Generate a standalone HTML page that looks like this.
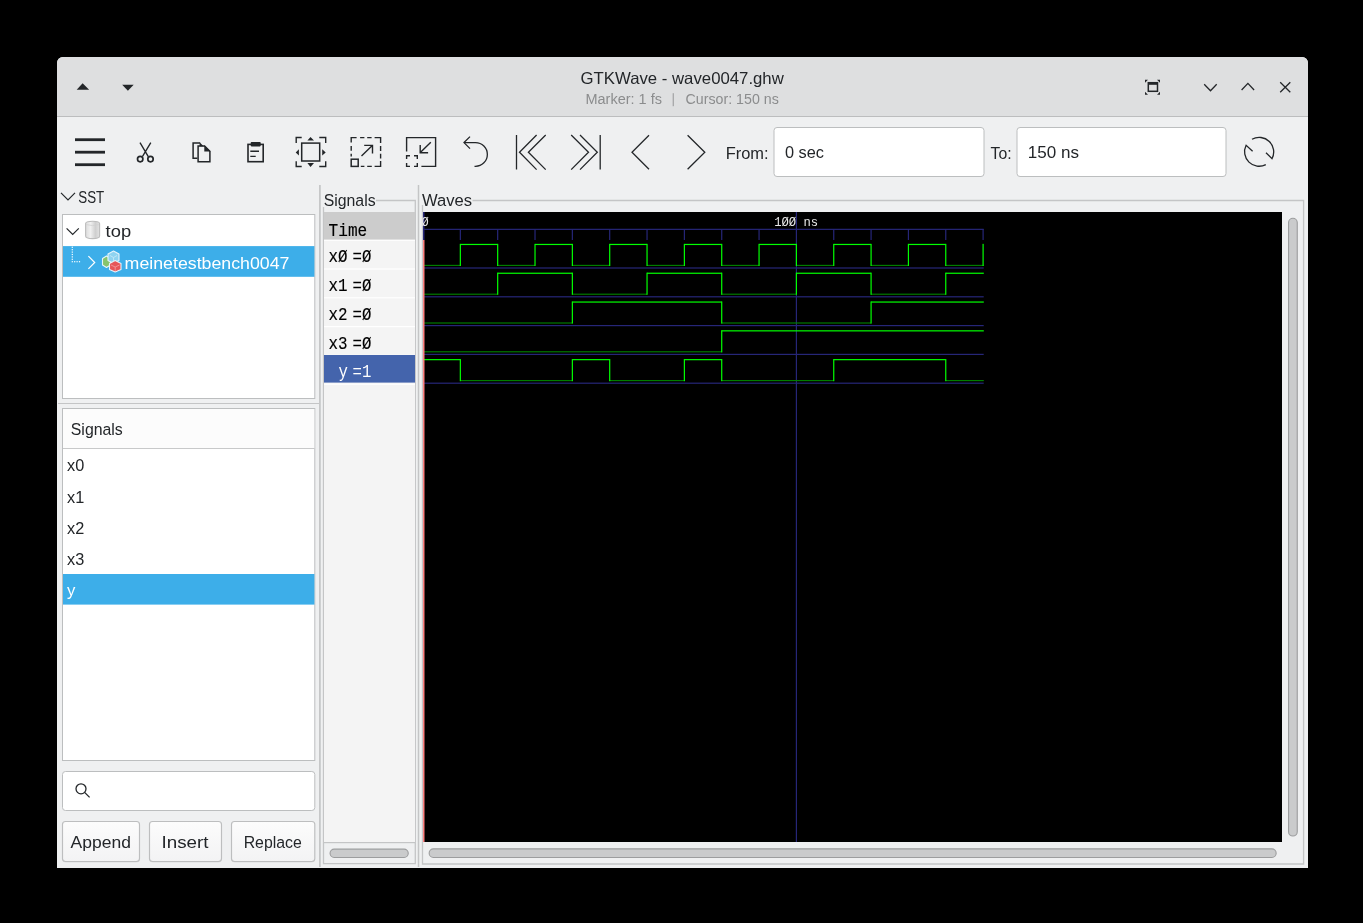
<!DOCTYPE html>
<html><head><meta charset="utf-8"><title>GTKWave - wave0047.ghw</title>
<style>
html,body{margin:0;padding:0;background:#000;width:1363px;height:923px;overflow:hidden}
svg{display:block;position:absolute;left:0;top:0;will-change:transform}
.s{font-family:"Liberation Sans",sans-serif;fill:#232629}
.m{font-family:"Liberation Mono",monospace;stroke:currentColor;stroke-width:0.15}
</style></head><body>
<svg width="1363" height="923" viewBox="0 0 1363 923">
<!-- window -->
<path d="M57,63 A6,6 0 0 1 63,57 L1302,57 A6,6 0 0 1 1308,63 L1308,868 L57,868 Z" fill="#eff0f1"/>
<!-- title bar -->
<path d="M57,63 A6,6 0 0 1 63,57 L1302,57 A6,6 0 0 1 1308,63 L1308,116 L57,116 Z" fill="#dedfe0"/>
<rect x="57" y="116" width="1251" height="1" fill="#bcbdbe"/>

<!-- title texts -->
<text class="s" x="580.5" y="83.7" font-size="16.5" textLength="203.3" lengthAdjust="spacingAndGlyphs">GTKWave - wave0047.ghw</text>
<text class="s" x="585.5" y="103.7" font-size="14" fill="#8a8b8c" style="fill:#8b8c8d" textLength="76.4" lengthAdjust="spacingAndGlyphs">Marker: 1 fs</text>
<rect x="672.7" y="93.2" width="1.1" height="13" fill="#9c9d9e"/>
<text class="s" x="685.5" y="103.7" font-size="14" style="fill:#8b8c8d" textLength="93.3" lengthAdjust="spacingAndGlyphs">Cursor: 150 ns</text>

<!-- toolbar text -->
<text class="s" x="725.7" y="158.6" font-size="16.7" textLength="42.9" lengthAdjust="spacingAndGlyphs">From:</text>
<rect x="774" y="127.5" width="210" height="49" rx="3" fill="#fff" stroke="#bcbebf" stroke-width="1"/>
<text class="s" x="785" y="158.4" font-size="16.7" textLength="39" lengthAdjust="spacingAndGlyphs">0 sec</text>
<text class="s" x="990.5" y="158.6" font-size="16.7" textLength="21.1" lengthAdjust="spacingAndGlyphs">To:</text>
<rect x="1017" y="127.5" width="209" height="49" rx="3" fill="#fff" stroke="#bcbebf" stroke-width="1"/>
<text class="s" x="1027.8" y="158.4" font-size="16.7" textLength="51.2" lengthAdjust="spacingAndGlyphs">150 ns</text>

<!-- left pane -->
<text class="s" x="78.3" y="203.3" font-size="16.7" textLength="26" lengthAdjust="spacingAndGlyphs">SST</text>
<rect x="62.5" y="214.5" width="252.3" height="184" fill="#fff" stroke="#bcbebf"/>
<rect x="63" y="246.1" width="251.4" height="30.7" fill="#3daee9"/>
<text class="s" x="105.6" y="237" font-size="16.7" textLength="25.5" lengthAdjust="spacingAndGlyphs">top</text>
<text class="s" x="124.6" y="269" font-size="16.7" style="fill:#fff" textLength="164.9" lengthAdjust="spacingAndGlyphs">meinetestbench0047</text>

<rect x="58" y="403" width="261" height="1" fill="#c4c5c6"/>
<rect x="62.5" y="408.5" width="252.3" height="352" fill="#fff" stroke="#bcbebf"/>
<rect x="63" y="409" width="251.3" height="39" fill="#fcfcfc"/>
<rect x="63" y="448" width="251.3" height="1" fill="#c8c9ca"/>
<text class="s" x="70.8" y="434.9" font-size="16.7" textLength="52" lengthAdjust="spacingAndGlyphs">Signals</text>
<rect x="63" y="574" width="251.4" height="30.6" fill="#3daee9"/>
<text class="s" x="67.1" y="471.3" font-size="16.7" textLength="17.2" lengthAdjust="spacingAndGlyphs">x0</text>
<text class="s" x="67.1" y="502.5" font-size="16.7" textLength="17.2" lengthAdjust="spacingAndGlyphs">x1</text>
<text class="s" x="67.1" y="533.7" font-size="16.7" textLength="17.2" lengthAdjust="spacingAndGlyphs">x2</text>
<text class="s" x="67.1" y="564.9" font-size="16.7" textLength="17.2" lengthAdjust="spacingAndGlyphs">x3</text>
<text class="s" x="67.1" y="596.1" font-size="16.7" style="fill:#fff">y</text>

<rect x="62.5" y="771.5" width="252.3" height="39" rx="3" fill="#fff" stroke="#bcbebf"/>
<defs><linearGradient id="btn" x1="0" x2="0" y1="0" y2="1"><stop offset="0" stop-color="#fcfcfc"/><stop offset="1" stop-color="#f3f3f4"/></linearGradient></defs>
<rect x="62.5" y="822.5" width="77" height="40" rx="3.5" fill="#000" fill-opacity="0.07"/>
<rect x="149.5" y="822.5" width="72" height="40" rx="3.5" fill="#000" fill-opacity="0.07"/>
<rect x="231.5" y="822.5" width="83.3" height="40" rx="3.5" fill="#000" fill-opacity="0.07"/>
<rect x="62.5" y="821.5" width="77" height="40" rx="3" fill="url(#btn)" stroke="#bdbebf" stroke-width="1.15"/>
<rect x="149.5" y="821.5" width="72" height="40" rx="3" fill="url(#btn)" stroke="#bdbebf" stroke-width="1.15"/>
<rect x="231.5" y="821.5" width="83.3" height="40" rx="3" fill="url(#btn)" stroke="#bdbebf" stroke-width="1.15"/>
<text class="s" x="70.6" y="848" font-size="16.7" textLength="60.3" lengthAdjust="spacingAndGlyphs">Append</text>
<text class="s" x="161.5" y="848" font-size="16.7" textLength="47" lengthAdjust="spacingAndGlyphs">Insert</text>
<text class="s" x="243.7" y="848" font-size="16.7" textLength="58.1" lengthAdjust="spacingAndGlyphs">Replace</text>

<!-- pane separators -->
<rect x="319.05" y="185" width="1.7" height="682" fill="#c4c5c6"/>
<rect x="417.75" y="185" width="1.5" height="682" fill="#c4c5c6"/>

<!-- signals pane -->
<text class="s" x="323.7" y="205.9" font-size="16.7" textLength="51.9" lengthAdjust="spacingAndGlyphs">Signals</text>
<path d="M376,200.5 H415.3 V863.6 H323.5 V207" fill="none" stroke="#c4c5c6" stroke-width="1.3"/>
<rect x="324" y="212" width="91" height="630" fill="#f4f4f4"/>
<rect x="324" y="212" width="91" height="28" fill="#cccccc"/>
<text class="m" color="#000" x="328.6" y="236" font-size="18.6" fill="#000" textLength="38.6" lengthAdjust="spacingAndGlyphs">Time</text>
<rect x="324" y="239.60" width="91" height="1.2" fill="#ffffff"/>
<rect x="324" y="268.40" width="91" height="1.2" fill="#ffffff"/>
<rect x="324" y="297.20" width="91" height="1.2" fill="#ffffff"/>
<rect x="324" y="326.00" width="91" height="1.2" fill="#ffffff"/>
<rect x="324" y="354.80" width="91" height="1.2" fill="#ffffff"/>
<rect x="324" y="383.60" width="91" height="1.2" fill="#ffffff"/>
<text class="m" color="#000" x="328.6" y="262.1" font-size="18.6" fill="#000" textLength="19" lengthAdjust="spacingAndGlyphs">xØ</text>
<text class="m" color="#000" x="352.6" y="262.1" font-size="18.6" fill="#000" textLength="18.8" lengthAdjust="spacingAndGlyphs">=Ø</text>
<text class="m" color="#000" x="328.6" y="290.9" font-size="18.6" fill="#000" textLength="19" lengthAdjust="spacingAndGlyphs">x1</text>
<text class="m" color="#000" x="352.6" y="290.9" font-size="18.6" fill="#000" textLength="18.8" lengthAdjust="spacingAndGlyphs">=Ø</text>
<text class="m" color="#000" x="328.6" y="319.7" font-size="18.6" fill="#000" textLength="19" lengthAdjust="spacingAndGlyphs">x2</text>
<text class="m" color="#000" x="352.6" y="319.7" font-size="18.6" fill="#000" textLength="18.8" lengthAdjust="spacingAndGlyphs">=Ø</text>
<text class="m" color="#000" x="328.6" y="348.5" font-size="18.6" fill="#000" textLength="19" lengthAdjust="spacingAndGlyphs">x3</text>
<text class="m" color="#000" x="352.6" y="348.5" font-size="18.6" fill="#000" textLength="18.8" lengthAdjust="spacingAndGlyphs">=Ø</text>
<rect x="324" y="355" width="91" height="27.6" fill="#4464ac"/>
<text class="m" color="#fff" style="stroke:none" x="338.6" y="377.3" font-size="18.6" fill="#fff" textLength="9.4" lengthAdjust="spacingAndGlyphs">y</text>
<text class="m" color="#fff" style="stroke:none" x="352.6" y="377.3" font-size="18.6" fill="#fff" textLength="18.8" lengthAdjust="spacingAndGlyphs">=1</text>
<rect x="324" y="842" width="91" height="1.2" fill="#c4c5c6"/>
<rect x="330.05" y="849.15" width="78.2" height="8.3" rx="4.15" fill="#cacbcc" stroke="#9c9d9e" stroke-width="1.1"/>

<!-- waves pane -->
<text class="s" x="422" y="205.9" font-size="16.7" textLength="50.1" lengthAdjust="spacingAndGlyphs">Waves</text>
<path d="M472.5,200.5 H1303.6 V864 H422.5 V205" fill="none" stroke="#c4c5c6" stroke-width="1.3"/>
<rect x="423" y="212" width="859" height="630" fill="#000"/>
<rect x="423" y="228.75" width="560.70" height="1.2" fill="#262678"/>
<rect x="459.74" y="229" width="1.2" height="11" fill="#262678"/>
<rect x="497.08" y="229" width="1.2" height="11" fill="#262678"/>
<rect x="534.42" y="229" width="1.2" height="11" fill="#262678"/>
<rect x="571.76" y="229" width="1.2" height="11" fill="#262678"/>
<rect x="609.10" y="229" width="1.2" height="11" fill="#262678"/>
<rect x="646.44" y="229" width="1.2" height="11" fill="#262678"/>
<rect x="683.78" y="229" width="1.2" height="11" fill="#262678"/>
<rect x="721.12" y="229" width="1.2" height="11" fill="#262678"/>
<rect x="758.46" y="229" width="1.2" height="11" fill="#262678"/>
<rect x="833.14" y="229" width="1.2" height="11" fill="#262678"/>
<rect x="870.48" y="229" width="1.2" height="11" fill="#262678"/>
<rect x="907.82" y="229" width="1.2" height="11" fill="#262678"/>
<rect x="945.16" y="229" width="1.2" height="11" fill="#262678"/>
<rect x="982.50" y="229" width="1.2" height="11" fill="#262678"/>
<rect x="423" y="212" width="1.5" height="28" fill="#262678"/>
<rect x="423" y="267.40" width="560.70" height="1.2" fill="#262678"/>
<rect x="423" y="296.20" width="560.70" height="1.2" fill="#262678"/>
<rect x="423" y="325.00" width="560.70" height="1.2" fill="#262678"/>
<rect x="423" y="353.80" width="560.70" height="1.2" fill="#262678"/>
<rect x="423" y="382.60" width="560.70" height="1.2" fill="#262678"/>
<rect x="795.80" y="212" width="1.2" height="630" fill="#262678"/>
<rect x="423.00" y="264.85" width="37.34" height="1.1" fill="#008400"/>
<rect x="460.34" y="243.85" width="37.34" height="1.2" fill="#00ff00"/>
<rect x="459.74" y="243.85" width="1.2" height="22.15" fill="#00ff00"/>
<rect x="497.68" y="264.85" width="37.34" height="1.1" fill="#008400"/>
<rect x="497.08" y="243.85" width="1.2" height="22.15" fill="#00ff00"/>
<rect x="535.02" y="243.85" width="37.34" height="1.2" fill="#00ff00"/>
<rect x="534.42" y="243.85" width="1.2" height="22.15" fill="#00ff00"/>
<rect x="572.36" y="264.85" width="37.34" height="1.1" fill="#008400"/>
<rect x="571.76" y="243.85" width="1.2" height="22.15" fill="#00ff00"/>
<rect x="609.70" y="243.85" width="37.34" height="1.2" fill="#00ff00"/>
<rect x="609.10" y="243.85" width="1.2" height="22.15" fill="#00ff00"/>
<rect x="647.04" y="264.85" width="37.34" height="1.1" fill="#008400"/>
<rect x="646.44" y="243.85" width="1.2" height="22.15" fill="#00ff00"/>
<rect x="684.38" y="243.85" width="37.34" height="1.2" fill="#00ff00"/>
<rect x="683.78" y="243.85" width="1.2" height="22.15" fill="#00ff00"/>
<rect x="721.72" y="264.85" width="37.34" height="1.1" fill="#008400"/>
<rect x="721.12" y="243.85" width="1.2" height="22.15" fill="#00ff00"/>
<rect x="759.06" y="243.85" width="37.34" height="1.2" fill="#00ff00"/>
<rect x="758.46" y="243.85" width="1.2" height="22.15" fill="#00ff00"/>
<rect x="796.40" y="264.85" width="37.34" height="1.1" fill="#008400"/>
<rect x="795.80" y="243.85" width="1.2" height="22.15" fill="#00ff00"/>
<rect x="833.74" y="243.85" width="37.34" height="1.2" fill="#00ff00"/>
<rect x="833.14" y="243.85" width="1.2" height="22.15" fill="#00ff00"/>
<rect x="871.08" y="264.85" width="37.34" height="1.1" fill="#008400"/>
<rect x="870.48" y="243.85" width="1.2" height="22.15" fill="#00ff00"/>
<rect x="908.42" y="243.85" width="37.34" height="1.2" fill="#00ff00"/>
<rect x="907.82" y="243.85" width="1.2" height="22.15" fill="#00ff00"/>
<rect x="945.76" y="264.85" width="38.04" height="1.1" fill="#008400"/>
<rect x="945.16" y="243.85" width="1.2" height="22.15" fill="#00ff00"/>
<rect x="423.00" y="293.65" width="74.68" height="1.1" fill="#008400"/>
<rect x="497.68" y="272.65" width="74.68" height="1.2" fill="#00ff00"/>
<rect x="497.08" y="272.65" width="1.2" height="22.15" fill="#00ff00"/>
<rect x="572.36" y="293.65" width="74.68" height="1.1" fill="#008400"/>
<rect x="571.76" y="272.65" width="1.2" height="22.15" fill="#00ff00"/>
<rect x="647.04" y="272.65" width="74.68" height="1.2" fill="#00ff00"/>
<rect x="646.44" y="272.65" width="1.2" height="22.15" fill="#00ff00"/>
<rect x="721.72" y="293.65" width="74.68" height="1.1" fill="#008400"/>
<rect x="721.12" y="272.65" width="1.2" height="22.15" fill="#00ff00"/>
<rect x="796.40" y="272.65" width="74.68" height="1.2" fill="#00ff00"/>
<rect x="795.80" y="272.65" width="1.2" height="22.15" fill="#00ff00"/>
<rect x="871.08" y="293.65" width="74.68" height="1.1" fill="#008400"/>
<rect x="870.48" y="272.65" width="1.2" height="22.15" fill="#00ff00"/>
<rect x="945.76" y="272.65" width="38.04" height="1.2" fill="#00ff00"/>
<rect x="945.16" y="272.65" width="1.2" height="22.15" fill="#00ff00"/>
<rect x="423.00" y="322.45" width="149.36" height="1.1" fill="#008400"/>
<rect x="572.36" y="301.45" width="149.36" height="1.2" fill="#00ff00"/>
<rect x="571.76" y="301.45" width="1.2" height="22.15" fill="#00ff00"/>
<rect x="721.72" y="322.45" width="149.36" height="1.1" fill="#008400"/>
<rect x="721.12" y="301.45" width="1.2" height="22.15" fill="#00ff00"/>
<rect x="871.08" y="301.45" width="112.72" height="1.2" fill="#00ff00"/>
<rect x="870.48" y="301.45" width="1.2" height="22.15" fill="#00ff00"/>
<rect x="423.00" y="351.25" width="298.72" height="1.1" fill="#008400"/>
<rect x="721.72" y="330.25" width="262.08" height="1.2" fill="#00ff00"/>
<rect x="721.12" y="330.25" width="1.2" height="22.15" fill="#00ff00"/>
<rect x="423.00" y="359.05" width="37.34" height="1.2" fill="#00ff00"/>
<rect x="460.34" y="380.05" width="112.02" height="1.1" fill="#008400"/>
<rect x="459.74" y="359.05" width="1.2" height="22.15" fill="#00ff00"/>
<rect x="572.36" y="359.05" width="37.34" height="1.2" fill="#00ff00"/>
<rect x="571.76" y="359.05" width="1.2" height="22.15" fill="#00ff00"/>
<rect x="609.70" y="380.05" width="74.68" height="1.1" fill="#008400"/>
<rect x="609.10" y="359.05" width="1.2" height="22.15" fill="#00ff00"/>
<rect x="684.38" y="359.05" width="37.34" height="1.2" fill="#00ff00"/>
<rect x="683.78" y="359.05" width="1.2" height="22.15" fill="#00ff00"/>
<rect x="721.72" y="380.05" width="112.02" height="1.1" fill="#008400"/>
<rect x="721.12" y="359.05" width="1.2" height="22.15" fill="#00ff00"/>
<rect x="833.74" y="359.05" width="112.02" height="1.2" fill="#00ff00"/>
<rect x="833.14" y="359.05" width="1.2" height="22.15" fill="#00ff00"/>
<rect x="945.76" y="380.05" width="38.04" height="1.1" fill="#008400"/>
<rect x="945.16" y="359.05" width="1.2" height="22.15" fill="#00ff00"/>
<rect x="982.50" y="243.85" width="1.2" height="22.15" fill="#00ff00"/>
<rect x="423" y="240" width="1.5" height="602" fill="#ff8080"/>
<text class="m" color="#e8e8e8" style="stroke:none" x="421.6" y="226" font-size="12" fill="#e8e8e8">Ø</text>
<text class="m" color="#e8e8e8" style="stroke:none" x="774.2" y="226" font-size="12.8" fill="#e8e8e8" textLength="44" lengthAdjust="spacingAndGlyphs">1ØØ ns</text>
<rect x="1288.55" y="218.25" width="8.7" height="617.8" rx="4.35" fill="#cacbcc" stroke="#9c9d9e" stroke-width="1.1"/>
<rect x="429.15" y="848.85" width="847" height="8.6" rx="4.3" fill="#cacbcc" stroke="#9c9d9e" stroke-width="1.1"/>


<!-- titlebar buttons -->
<path d="M76.7,89.7 L82.6,83.2 L89.1,89.7 Z" fill="#232629"/>
<path d="M122.2,84.7 L133.7,84.7 L127.9,90.8 Z" fill="#232629"/>
<g fill="none" stroke="#232629" stroke-width="1.3">
<rect x="1148.3" y="82.7" width="9.2" height="8.6" stroke-width="1.5"/>
<path d="M1204.2,84.3 L1210.5,90.8 L1216.7,84.3"/>
<path d="M1241.6,90 L1247.9,83.4 L1254.1,90"/>
<path d="M1280.2,82.2 L1290.3,92.2 M1290.3,82.2 L1280.2,92.2"/>
</g>
<rect x="1148" y="82.2" width="10" height="2.6" fill="#232629"/>
<path d="M1145,79.7 h3 l-3,3 z M1160,79.7 h-3 l3,3 z M1145,94.7 h3 l-3,-3 z M1160,94.7 h-3 l3,-3 z" fill="#232629"/>

<!-- toolbar icons -->
<g fill="#232629">
<rect x="75" y="138.3" width="30" height="2.8"/>
<rect x="75" y="150.8" width="30" height="2.8"/>
<rect x="75" y="163.3" width="30" height="2.8"/>
</g>
<g fill="none" stroke="#232629" stroke-width="1.35">
<!-- scissors -->
<path d="M140,142.6 L148.3,156.6 M150.8,142.6 L142.4,156.6"/>
<circle cx="140.2" cy="159.1" r="2.7" stroke-width="1.7"/>
<circle cx="150.5" cy="159.1" r="2.7" stroke-width="1.7"/>
</g>
<g fill="none" stroke="#232629" stroke-width="1.5">
<!-- copy -->
<path d="M197.4,158.2 H193.1 V142.9 H200.2"/>
<path d="M198.1,145.9 H204.6 L209.9,151.2 V161.7 H198.1 Z"/>
<!-- paste -->
<rect x="248" y="144.4" width="15.2" height="17.3" stroke-width="1.6"/>
<path d="M250.3,151.2 H259 M250.3,156.4 H255.7" stroke-width="1.4"/>
</g>
<path d="M204.3,145.2 L210.6,151.5 L204.3,151.5 Z M199.6,142.2 L203.6,146.2 L199.6,146.2 Z" fill="#232629"/>
<rect x="250.7" y="142.1" width="10" height="4.3" rx="0.8" fill="#232629"/>

<g fill="none" stroke="#232629" stroke-width="1.4">
<!-- zoom fit -->
<rect x="301.7" y="143.1" width="18" height="17.9" stroke-width="1.5"/>
<path d="M296.2,143.1 V137.5 H301.7 M319.3,137.5 H325.7 V143.1 M325.7,161.2 V166.5 H319.3 M301.7,166.5 H296.2 V161.2"/>
<!-- zoom in (dashed box + arrow) -->
<path d="M351.2,142.4 V137.6 H356.6 M360.1,137.6 H364.4 M367.2,137.6 H371.6 M374.6,137.6 H380.6 V142.9 M380.6,146 V151 M380.6,153.8 V158.4 M380.6,160.9 V166.4 H374.6 M371.8,166.4 H367.2 M364.4,166.4 H360.8 M351.2,146 V150.7 M351.2,153.8 V156.6"/>
<rect x="351.2" y="159.2" width="7" height="7.2" stroke-width="1.5"/>
<path d="M361.5,156 L372.3,145.5 M364.2,145.4 H372.5 V153.5"/>
<!-- zoom out -->
<path d="M406.6,151.4 V137.6 H435.6 V166.4 H421.4"/>
<path d="M406.6,159 V155.7 H410 M414,155.7 H417.3 V159 M417.3,163 V166.4 H414 M410,166.4 H406.6 V163"/>
<path d="M430.8,142.2 L420.3,152.6 M420.2,145 V152.8 H428.1"/>
</g>
<g fill="#232629">
<path d="M307.4,140.6 L310.5,137.1 L314,140.6 Z M307.4,163.1 L310.5,166.9 L314,163.1 Z M298.9,149.3 L295.7,152.4 L298.9,155.5 Z M322.2,149.3 L325.7,152.4 L322.2,155.5 Z"/>
</g>
<g fill="none" stroke="#232629" stroke-width="1.3">
<!-- undo -->
<path d="M464,142.6 H475.5 A11.85,11.85 0 0 1 475.5,166.3 H474.5"/>
<path d="M470,136.6 L464,142.6 L470,148.6"/>
<!-- |<< -->
<path d="M516.5,135 V169.6 M536.6,135 L519.5,152.2 L536.6,169.6 M545.7,135 L528.4,152.2 L545.7,169.6"/>
<!-- >>| -->
<path d="M600.2,135 V169.6 M571.2,135 L588.5,152.2 L571.2,169.6 M580,135 L597.3,152.2 L580,169.6"/>
<!-- < > -->
<path d="M649,135.2 L632,152.2 L649,169.3"/>
<path d="M687.6,135.2 L704.8,152.2 L687.6,169.3"/>
<!-- refresh -->
<path d="M1252,139.3 A14.5,14.5 0 0 1 1272,158.7 L1266,152.7"/>
<path d="M1265.8,164.6 A14.5,14.5 0 0 1 1246.1,145.3 L1252.6,151.2"/>
</g>

<!-- SST chevrons -->
<g fill="none" stroke="#232629" stroke-width="1.2">
<path d="M61,192.8 L68,199.8 L75,192.8"/>
<path d="M66.6,228.3 L72.7,234.4 L78.8,228.3"/>
</g>
<path d="M88.4,256.2 L94.7,262.5 L88.4,268.8" fill="none" stroke="#fff" stroke-width="1.2"/>
<rect x="71.7" y="246.70" width="1.2" height="1.2" fill="#fff"/>
<rect x="71.7" y="249.10" width="1.2" height="1.2" fill="#fff"/>
<rect x="71.7" y="251.50" width="1.2" height="1.2" fill="#fff"/>
<rect x="71.7" y="253.90" width="1.2" height="1.2" fill="#fff"/>
<rect x="71.7" y="256.30" width="1.2" height="1.2" fill="#fff"/>
<rect x="71.7" y="258.70" width="1.2" height="1.2" fill="#fff"/>
<rect x="71.7" y="261.10" width="1.2" height="1.2" fill="#fff"/>
<rect x="74.10" y="261.10" width="1.2" height="1.2" fill="#fff"/>
<rect x="76.50" y="261.10" width="1.2" height="1.2" fill="#fff"/>
<rect x="78.90" y="261.10" width="1.2" height="1.2" fill="#fff"/>
<!-- db icon -->
<defs>
<linearGradient id="db" x1="0" x2="1" y1="0" y2="0"><stop offset="0" stop-color="#dcdcdc"/><stop offset="0.35" stop-color="#f0f0f0"/><stop offset="0.7" stop-color="#cfcfcf"/><stop offset="1" stop-color="#e2e2e2"/></linearGradient>
</defs>
<path d="M85.6,223.6 Q85.6,221.2 92.6,221.2 Q99.6,221.2 99.6,223.6 V236 Q99.6,238.6 92.6,238.6 Q85.6,238.6 85.6,236 Z" fill="url(#db)" stroke="#bdbdbd" stroke-width="1.1"/>
<path d="M86.4,224.6 Q92.6,226.6 98.8,224.6" fill="none" stroke="#d0d0d0" stroke-width="0.8"/>
<!-- module icon -->
<g stroke="#e6f4fb" stroke-width="1.1" stroke-linejoin="round">
<path d="M102.5,258.5 L106.5,256 L110.5,258.5 L110.5,265 L106.5,267.5 L102.5,265 Z" fill="#86c46e"/>
<path d="M108,254 L113.5,251 L119,254 L119,260.5 L113.5,263.5 L108,260.5 Z" fill="#8fd3f0"/>
<path d="M109.5,263.5 L115.2,260.5 L121,263.5 L121,269.5 L115.2,272 L109.5,269.5 Z" fill="#e65659"/>
</g>
<path d="M110,255.5 L113.5,257.5 L117,255.5 M113.5,257.5 V262" fill="none" stroke="#c9ebf8" stroke-width="0.8"/>
<path d="M111,265 L115.2,267 L119.5,265 M115.2,267 V271" fill="none" stroke="#f4a0a2" stroke-width="0.8"/>
<!-- search icon -->
<g fill="none" stroke="#232629" stroke-width="1.3">
<circle cx="81" cy="788.8" r="5"/>
<path d="M84.6,792.4 L89.6,797.4"/>
</g>

</svg>
</body></html>
